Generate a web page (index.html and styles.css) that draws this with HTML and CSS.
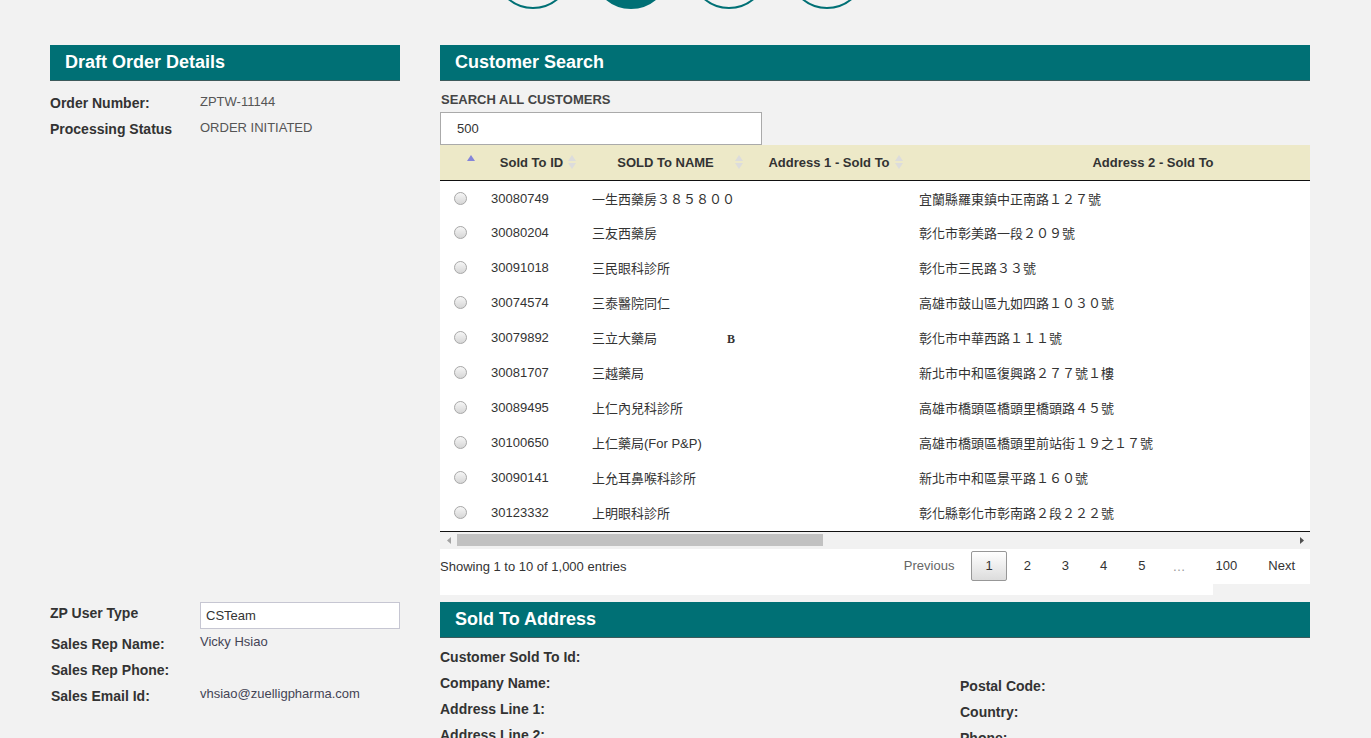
FILE: index.html
```html
<!DOCTYPE html>
<html lang="zh-Hant">
<head>
    <meta charset="UTF-8">
    <meta name="viewport" content="width=device-width, initial-scale=1.0">
    <title>Draft Order - Customer Search</title>
    <link rel="stylesheet" href="styles.css">
</head>
<body>
    <!-- Indicador de pasos -->
    <div class="steps">
        <div class="step"></div>
        <div class="step active"></div>
        <div class="step"></div>
        <div class="step"></div>
    </div>

    <div class="layout">
        <section class="panel">
            <h2 class="panel-title">Draft Order Details</h2>
            <div class="info-list">
                <div class="info-row">
                    <span class="info-label">Order Number:</span>
                    <span class="info-value">ZPTW-11144</span>
                </div>
                <div class="info-row">
                    <span class="info-label">Processing Status</span>
                    <span class="info-value">ORDER INITIATED</span>
                </div>
            </div>
        </section>

        <section class="panel">
            <h2 class="panel-title">Customer Search</h2>
            <div class="search-label">SEARCH ALL CUSTOMERS</div>
            <input class="search-input" type="text" value="500">

            <div class="table-wrap">
                <table class="customers">
                    <colgroup>
                        <col class="c-radio">
                        <col class="c-id">
                        <col class="c-name">
                        <col class="c-addr1">
                        <col class="c-addr2">
                        <col>
                    </colgroup>
                    <thead>
                        <tr>
                            <th><span class="sort asc"><svg width="8" height="6" viewBox="0 0 8 6"><path d="M0 6 L4 0 L8 6 Z" fill="#8585d9"/></svg></span></th>
                            <th>Sold To ID<span class="sort"><svg width="8" height="14" viewBox="0 0 8 14"><path d="M0 6 L4 0 L8 6 Z M0 8 L4 14 L8 8 Z" fill="#dcdcdc"/></svg></span></th>
                            <th>SOLD To NAME<span class="sort"><svg width="8" height="14" viewBox="0 0 8 14"><path d="M0 6 L4 0 L8 6 Z M0 8 L4 14 L8 8 Z" fill="#dcdcdc"/></svg></span></th>
                            <th>Address 1 - Sold To<span class="sort"><svg width="8" height="14" viewBox="0 0 8 14"><path d="M0 6 L4 0 L8 6 Z M0 8 L4 14 L8 8 Z" fill="#dcdcdc"/></svg></span></th>
                            <th>Address 2 - Sold To</th>
                            <th></th>
                        </tr>
                    </thead>
                    <tbody>
                        <tr><td class="td-radio"><input class="radio" type="radio" name="cust"></td><td>30080749</td><td>一生西藥房３８５８００</td><td></td><td>宜蘭縣羅東鎮中正南路１２７號</td><td></td></tr>
                        <tr><td class="td-radio"><input class="radio" type="radio" name="cust"></td><td>30080204</td><td>三友西藥房</td><td></td><td>彰化市彰美路一段２０９號</td><td></td></tr>
                        <tr><td class="td-radio"><input class="radio" type="radio" name="cust"></td><td>30091018</td><td>三民眼科診所</td><td></td><td>彰化市三民路３３號</td><td></td></tr>
                        <tr><td class="td-radio"><input class="radio" type="radio" name="cust"></td><td>30074574</td><td>三泰醫院同仁</td><td></td><td>高雄市鼓山區九如四路１０３０號</td><td></td></tr>
                        <tr><td class="td-radio"><input class="radio" type="radio" name="cust"></td><td>30079892</td><td>三立大藥局<span class="tag">B</span></td><td></td><td>彰化市中華西路１１１號</td><td></td></tr>
                        <tr><td class="td-radio"><input class="radio" type="radio" name="cust"></td><td>30081707</td><td>三越藥局</td><td></td><td>新北市中和區復興路２７７號１樓</td><td></td></tr>
                        <tr><td class="td-radio"><input class="radio" type="radio" name="cust"></td><td>30089495</td><td>上仁內兒科診所</td><td></td><td>高雄市橋頭區橋頭里橋頭路４５號</td><td></td></tr>
                        <tr><td class="td-radio"><input class="radio" type="radio" name="cust"></td><td>30100650</td><td>上仁藥局(For P&amp;P)</td><td></td><td>高雄市橋頭區橋頭里前站街１９之１７號</td><td></td></tr>
                        <tr><td class="td-radio"><input class="radio" type="radio" name="cust"></td><td>30090141</td><td>上允耳鼻喉科診所</td><td></td><td>新北市中和區景平路１６０號</td><td></td></tr>
                        <tr><td class="td-radio"><input class="radio" type="radio" name="cust"></td><td>30123332</td><td>上明眼科診所</td><td></td><td>彰化縣彰化市彰南路２段２２２號</td><td></td></tr>
                    </tbody>
                </table>
            </div>

            <!-- Barra de desplazamiento horizontal -->
            <div class="hscroll">
                <span class="scroll-btn"><svg width="4" height="7" viewBox="0 0 4 7"><path d="M4 0 L0 3.5 L4 7 Z" fill="#a3a3a3"/></svg></span>
                <span class="thumb"></span>
                <span class="scroll-btn right"><svg width="4" height="7" viewBox="0 0 4 7"><path d="M0 0 L4 3.5 L0 7 Z" fill="#505050"/></svg></span>
            </div>

            <div class="dt-bottom">
                <div class="dt-info">Showing 1 to 10 of 1,000 entries</div>
                <div class="pager">
                    <a href="#" class="page-btn disabled">Previous</a>
                    <a href="#" class="page-btn current">1</a>
                    <a href="#" class="page-btn">2</a>
                    <a href="#" class="page-btn">3</a>
                    <a href="#" class="page-btn">4</a>
                    <a href="#" class="page-btn">5</a>
                    <span class="ellipsis">…</span>
                    <a href="#" class="page-btn">100</a>
                    <a href="#" class="page-btn">Next</a>
                </div>
            </div>
            <div class="dt-gap"></div>
        </section>

        <section class="panel">
            <div class="info-row zp-row">
                <span class="info-label">ZP User Type</span>
                <input class="user-input" type="text" value="CSTeam">
            </div>
            <div class="info-row rep-row">
                <span class="info-label">Sales Rep Name:</span>
                <span class="info-value rep-value">Vicky Hsiao</span>
            </div>
            <div class="info-row rep-row">
                <span class="info-label">Sales Rep Phone:</span>
                <span class="info-value rep-value"></span>
            </div>
            <div class="info-row rep-row">
                <span class="info-label">Sales Email Id:</span>
                <span class="info-value rep-value">vhsiao@zuelligpharma.com</span>
            </div>
        </section>

        <section class="panel">
            <h2 class="panel-title">Sold To Address</h2>
            <div class="address-grid">
                <div class="address-col">
                    <div class="info-row"><span class="info-label">Customer Sold To Id:</span></div>
                    <div class="info-row"><span class="info-label">Company Name:</span></div>
                    <div class="info-row"><span class="info-label">Address Line 1:</span></div>
                    <div class="info-row"><span class="info-label">Address Line 2:</span></div>
                </div>
                <div class="address-col right">
                    <div class="info-row"><span class="info-label">Postal Code:</span></div>
                    <div class="info-row"><span class="info-label">Country:</span></div>
                    <div class="info-row"><span class="info-label">Phone:</span></div>
                </div>
            </div>
        </section>
    </div>
</body>
</html>
```

FILE: styles.css
```css
:root {
    --teal: #007075;
    --teal-border: #3d5a5b;
    --background-color: #f2f2f2;
    --text-color: #333;
    --head-bg: #ede9c8;
}
body {
    font-family: "Liberation Sans", "Noto Sans CJK TC", Arial, sans-serif;
    font-size: 13px;
    margin: 0;
    padding: 0;
    background-color: var(--background-color);
    color: var(--text-color);
    overflow: hidden;
}
.steps {
    display: flex;
    gap: 20px;
    padding-left: 494px;
    height: 45px;
    overflow: hidden;
}
.step {
    flex: none;
    width: 74px;
    height: 74px;
    margin-top: -69px;
    border: 2px solid var(--teal);
    border-radius: 50%;
}
.step.active {
    background-color: var(--teal);
}
.layout {
    display: grid;
    grid-template-columns: 350px 870px;
    column-gap: 40px;
    row-gap: 7px;
    padding-left: 50px;
}
.panel-title {
    margin: 0;
    height: 35px;
    line-height: 35px;
    padding-left: 15px;
    background-color: var(--teal);
    border-bottom: 1px solid var(--teal-border);
    color: white;
    font-size: 18px;
    font-weight: bold;
}
.info-list {
    margin-top: 9px;
}
.info-row {
    display: flex;
    align-items: center;
    height: 26px;
}
.info-label {
    flex: none;
    width: 150px;
    font-size: 14px;
    font-weight: bold;
    color: #333;
}
.info-value {
    font-size: 13px;
    color: #555;
    margin-top: -4px;
}

/* Búsqueda de clientes */
.search-label {
    margin: 11px 0 5px 1px;
    line-height: 15px;
    font-size: 13px;
    font-weight: bold;
    color: #444;
}
.search-input {
    display: block;
    box-sizing: border-box;
    width: 322px;
    height: 33px;
    padding: 0 16px;
    border: 1px solid #aaa;
    background: white;
    font: 13px "Liberation Sans", sans-serif;
    color: #333;
    outline: none;
}
.table-wrap {
    overflow: hidden;
    background: white;
}
.customers {
    border-collapse: collapse;
    table-layout: fixed;
    width: 2010px;
}
.c-radio { width: 41px; }
.c-id { width: 101px; }
.c-name { width: 167px; }
.c-addr1 { width: 160px; }
.c-addr2 { width: 488px; }
.customers th {
    position: relative;
    box-sizing: border-box;
    height: 35px;
    padding: 0;
    background-color: var(--head-bg);
    border-bottom: 1px solid #111;
    font-size: 13px;
    font-weight: bold;
    color: #333;
    text-align: center;
}
.sort {
    position: absolute;
    right: 6px;
    top: 10px;
    line-height: 0;
}
.sort.asc {
    top: 10px;
}
.customers td {
    box-sizing: border-box;
    height: 35px;
    padding: 0 10px;
    white-space: nowrap;
    font-size: 13px;
    color: #333;
}
.customers tbody tr:first-child td {
    padding-top: 1px;
}
.customers tbody tr:last-child td {
    height: 36px;
    border-bottom: 1px solid #111;
}
.customers td.td-radio {
    padding-left: 14px;
}
.radio {
    appearance: none;
    -webkit-appearance: none;
    display: block;
    width: 13px;
    height: 13px;
    margin: 0;
    border: 1px solid #a8a8a8;
    border-radius: 50%;
    background: linear-gradient(#f6f6f6, #d6d6d6);
}
.tag {
    margin-left: 70px;
    font-family: "Liberation Serif", serif;
    font-weight: bold;
    font-size: 12px;
}
.hscroll {
    display: flex;
    align-items: center;
    height: 17px;
    background-color: #f1f1f1;
}
.scroll-btn {
    display: flex;
    align-items: center;
    justify-content: center;
    width: 17px;
    height: 17px;
}
.scroll-btn.right {
    margin-left: auto;
}
.thumb {
    width: 366px;
    height: 12px;
    background-color: #c1c1c1;
}
.dt-bottom {
    display: flex;
    align-items: center;
    justify-content: space-between;
    height: 35px;
    background: white;
}
.dt-info {
    font-size: 13px;
    color: #333;
}
.pager {
    display: flex;
    align-items: center;
}
.page-btn {
    margin-left: 3px;
    padding: 6px 13px;
    line-height: 16px;
    border: 1px solid transparent;
    border-radius: 2px;
    color: #333;
    text-decoration: none;
    font-size: 13px;
}
.page-btn.current {
    border-color: #979797;
    background: linear-gradient(#fff, #dcdcdc);
}
.page-btn.disabled {
    color: #666;
}
.page-btn:last-child {
    padding-right: 14px;
}
.ellipsis {
    padding: 0 13px;
    color: #999;
}
.dt-gap {
    width: 773px;
    height: 11px;
    background: white;
}

/* Datos del usuario */
.zp-row {
    align-items: flex-start;
    height: 27px;
}
.zp-row .info-label {
    line-height: 22px;
}
.user-input {
    box-sizing: border-box;
    width: 200px;
    height: 27px;
    padding: 0 5px;
    border: 1px solid #c6c6d2;
    background: white;
    font: 13px "Liberation Sans", sans-serif;
    color: #333;
    outline: none;
}
.rep-row .info-label {
    padding-left: 1px;
    width: 149px;
}
.zp-row + .rep-row {
    margin-top: 2px;
}
.rep-value {
    color: #445;
}

/* Dirección */
.address-grid {
    display: grid;
    grid-template-columns: 520px 1fr;
    margin-top: 6px;
}
.address-col .info-label {
    width: auto;
}
.address-col.right {
    padding-top: 29px;
}
```
